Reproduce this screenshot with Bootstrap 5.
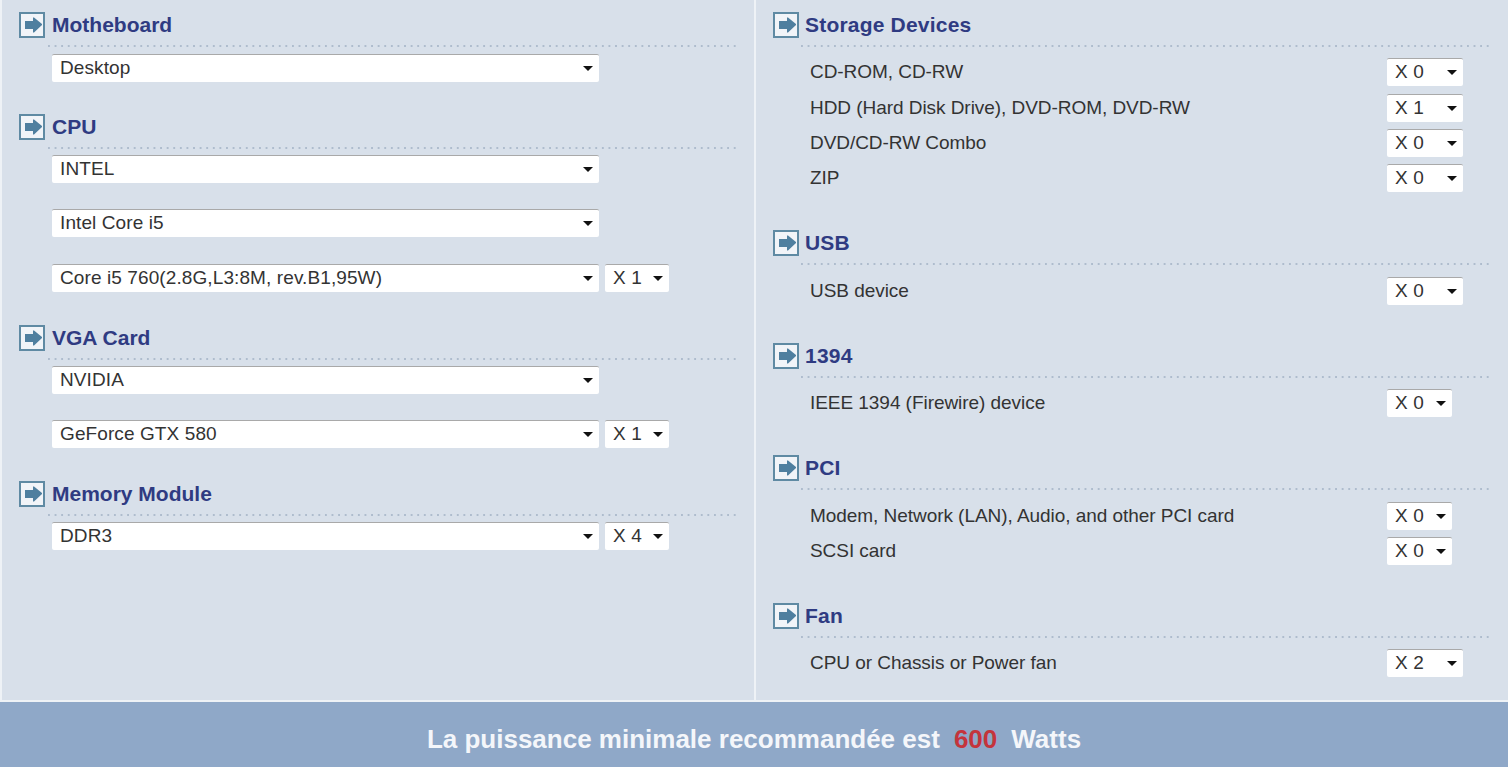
<!DOCTYPE html>
<html lang="fr">
<head>
    <meta charset="UTF-8">
    <meta name="viewport" content="width=device-width, initial-scale=1.0">
    <title>Calculateur de puissance</title>
    <link href="https://cdn.jsdelivr.net/npm/bootstrap@5.3.0/dist/css/bootstrap.min.css" rel="stylesheet">
    <style>
        body { background: #eef2f6; font-family: "Liberation Sans", Arial, sans-serif; color: #333; overflow: hidden; }
        .panels { height: 700px; }
        .side { background: #d8e0ea; border-left: 2px solid #eef2f6; padding: 12px 17px 0; height: 700px; }
        .sect { margin-bottom: 33px; }
        .sect.lead-sect { margin-bottom: 32px; }
        .side-r .sect { margin-bottom: 38px; }
        .sect-head { height: 33px; gap: 7px; }
        .side-r .sect-head { gap: 6px; }
        .sect-ico { width: 26px; height: 26px; flex: none; display: block; }
        .sect-title { font-size: 21px; font-weight: 700; color: #2f3b82; line-height: 26px; margin: 0; }
        .side-r .sect-title { letter-spacing: .2px; }
        .dots { height: 2px; margin: 0 0 6px 29px; width: 688px; background-image: linear-gradient(to right, #aebccd 2px, transparent 2px); background-size: 6.6px 2px; }
        .lead-sect .dots { margin-bottom: 7px; }
        .side-r .dots { margin: 0 0 11px 28px; width: 689px; }
        .side-r .extra { margin-bottom: 12px; }
        .pick {
            appearance: none; -webkit-appearance: none;
            height: 28px; border: 0; border-top: 1px solid #a9a9a9; border-radius: 2px;
            padding: 0 20px 2px 8px; font: 19px "Liberation Sans", Arial, sans-serif; letter-spacing: .1px; color: #333;
            background: #fff url("data:image/svg+xml,%3Csvg xmlns='http://www.w3.org/2000/svg' width='10' height='5'%3E%3Cpath d='M0 0h10L5 5z' fill='%23111'/%3E%3C/svg%3E") no-repeat right 6px center;
        }
        .pick-wide { width: 547px; margin-left: 33px; }
        .pick-qty { width: 64px; }
        .pick-qty-l { width: 76px; }
        .pick-qty-s { width: 65px; }
        .pick-line { gap: 6px; }
        .gap-a { margin-bottom: 26px; }
        .gap-b { margin-bottom: 27px; }
        .dev-line { height: 28px; margin-bottom: 7px; padding-left: 37px; font-size: 19px; }
        .dev-line:last-child { margin-bottom: 0; }
        .dev-line.first { margin-bottom: 8px; }
        .dev-name { width: 577px; flex: none; letter-spacing: -.05px; }
        .total-bar { height: 65px; margin-top: 2px; padding-top: 9px; background: #8fa8c8; color: #f4f6fa; font-size: 26px; font-weight: 700; }
        .total-val { color: #c4343c; margin: 0 14px; }
    </style>
</head>
<body>
    <svg width="0" height="0" class="position-absolute">
        <symbol id="arrowBox" viewBox="0 0 26 26">
            <rect x="1" y="1" width="24" height="24" fill="#f1f4f8" stroke="#5f8aa3" stroke-width="2"/>
            <path d="M6 9h8V5.500l1 0L23 12v1l-8 7.500h-1V17H6z" fill="#4f7f9f"/>
        </symbol>
    </svg>

    <div class="row g-0 panels">
        <div class="col-6 side">
            <section class="sect lead-sect">
                <div class="d-flex sect-head">
                    <svg class="sect-ico"><use href="#arrowBox"/></svg>
                    <h2 class="sect-title">Motheboard</h2>
                </div>
                <div class="dots"></div>
                <select class="pick pick-wide d-block"><option>Desktop</option></select>
            </section>
            <section class="sect">
                <div class="d-flex sect-head">
                    <svg class="sect-ico"><use href="#arrowBox"/></svg>
                    <h2 class="sect-title">CPU</h2>
                </div>
                <div class="dots"></div>
                <select class="pick pick-wide d-block gap-a"><option>INTEL</option></select>
                <select class="pick pick-wide d-block gap-b"><option>Intel Core i5</option></select>
                <div class="d-flex pick-line">
                    <select class="pick pick-wide"><option>Core i5 760(2.8G,L3:8M, rev.B1,95W)</option></select>
                    <select class="pick pick-qty"><option>X 1</option></select>
                </div>
            </section>
            <section class="sect">
                <div class="d-flex sect-head">
                    <svg class="sect-ico"><use href="#arrowBox"/></svg>
                    <h2 class="sect-title">VGA Card</h2>
                </div>
                <div class="dots"></div>
                <select class="pick pick-wide d-block gap-a"><option>NVIDIA</option></select>
                <div class="d-flex pick-line">
                    <select class="pick pick-wide"><option>GeForce GTX 580</option></select>
                    <select class="pick pick-qty"><option>X 1</option></select>
                </div>
            </section>
            <section class="sect">
                <div class="d-flex sect-head">
                    <svg class="sect-ico"><use href="#arrowBox"/></svg>
                    <h2 class="sect-title">Memory Module</h2>
                </div>
                <div class="dots"></div>
                <div class="d-flex pick-line">
                    <select class="pick pick-wide"><option>DDR3</option></select>
                    <select class="pick pick-qty"><option>X 4</option></select>
                </div>
            </section>
        </div>

        <div class="col-6 side side-r">
            <section class="sect">
                <div class="d-flex sect-head">
                    <svg class="sect-ico"><use href="#arrowBox"/></svg>
                    <h2 class="sect-title">Storage Devices</h2>
                </div>
                <div class="dots"></div>
                <div class="d-flex align-items-center dev-line first"><span class="dev-name">CD-ROM, CD-RW</span><select class="pick pick-qty-l"><option>X 0</option></select></div>
                <div class="d-flex align-items-center dev-line"><span class="dev-name">HDD (Hard Disk Drive), DVD-ROM, DVD-RW</span><select class="pick pick-qty-l"><option>X 1</option></select></div>
                <div class="d-flex align-items-center dev-line"><span class="dev-name">DVD/CD-RW Combo</span><select class="pick pick-qty-l"><option>X 0</option></select></div>
                <div class="d-flex align-items-center dev-line"><span class="dev-name">ZIP</span><select class="pick pick-qty-l"><option>X 0</option></select></div>
            </section>
            <section class="sect">
                <div class="d-flex sect-head">
                    <svg class="sect-ico"><use href="#arrowBox"/></svg>
                    <h2 class="sect-title">USB</h2>
                </div>
                <div class="dots extra"></div>
                <div class="d-flex align-items-center dev-line"><span class="dev-name">USB device</span><select class="pick pick-qty-l"><option>X 0</option></select></div>
            </section>
            <section class="sect">
                <div class="d-flex sect-head">
                    <svg class="sect-ico"><use href="#arrowBox"/></svg>
                    <h2 class="sect-title">1394</h2>
                </div>
                <div class="dots"></div>
                <div class="d-flex align-items-center dev-line"><span class="dev-name">IEEE 1394 (Firewire) device</span><select class="pick pick-qty-s"><option>X 0</option></select></div>
            </section>
            <section class="sect">
                <div class="d-flex sect-head">
                    <svg class="sect-ico"><use href="#arrowBox"/></svg>
                    <h2 class="sect-title">PCI</h2>
                </div>
                <div class="dots extra"></div>
                <div class="d-flex align-items-center dev-line"><span class="dev-name">Modem, Network (LAN), Audio, and other PCI card</span><select class="pick pick-qty-s"><option>X 0</option></select></div>
                <div class="d-flex align-items-center dev-line"><span class="dev-name">SCSI card</span><select class="pick pick-qty-s"><option>X 0</option></select></div>
            </section>
            <section class="sect">
                <div class="d-flex sect-head">
                    <svg class="sect-ico"><use href="#arrowBox"/></svg>
                    <h2 class="sect-title">Fan</h2>
                </div>
                <div class="dots"></div>
                <div class="d-flex align-items-center dev-line"><span class="dev-name">CPU or Chassis or Power fan</span><select class="pick pick-qty-l"><option>X 2</option></select></div>
            </section>
        </div>
    </div>

    <div class="d-flex align-items-center justify-content-center total-bar">
        La puissance minimale recommandée est <span class="total-val">600</span> Watts
    </div>

    <script src="https://cdn.jsdelivr.net/npm/bootstrap@5.3.0/dist/js/bootstrap.bundle.min.js"></script>
</body>
</html>
